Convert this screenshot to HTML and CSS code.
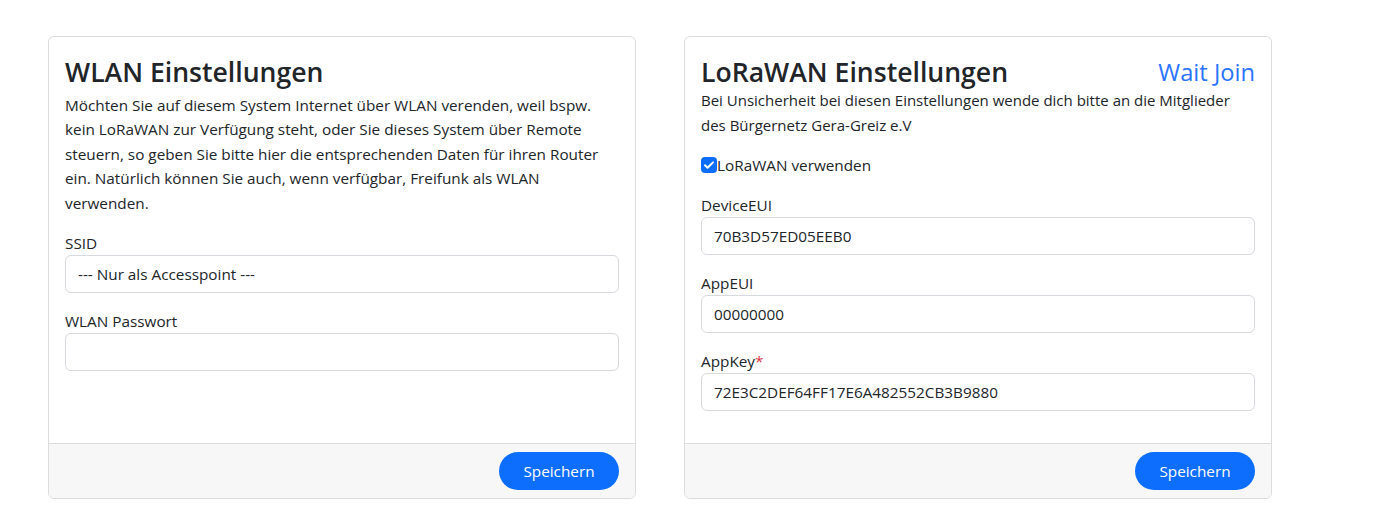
FILE: index.html
```html
<!DOCTYPE html>
<html lang="de">
<head>
<meta charset="utf-8">
<title>Einstellungen</title>
<link rel="stylesheet" href="styles.css">
</head>
<body>
<main class="page">
  <section class="card">
    <div class="card-body">
      <h2 class="card-title title-left">WLAN Einstellungen</h2>
      <p class="card-text">Möchten Sie auf diesem System Internet über WLAN verenden, weil bspw. kein LoRaWAN zur Verfügung steht, oder Sie dieses System über Remote steuern, so geben Sie bitte hier die entsprechenden Daten für ihren Router ein. Natürlich können Sie auch, wenn verfügbar, Freifunk als WLAN verwenden.</p>
      <div class="field">
        <label class="field-label" for="ssid">SSID</label>
        <input class="field-input" id="ssid" type="text" value="--- Nur als Accesspoint ---">
      </div>
      <div class="field">
        <label class="field-label" for="pw">WLAN Passwort</label>
        <input class="field-input" id="pw" type="password" value="">
      </div>
    </div>
    <div class="card-footer">
      <button class="btn-save" type="button">Speichern</button>
    </div>
  </section>

  <section class="card">
    <div class="card-body">
      <div class="card-head">
        <h2 class="card-title">LoRaWAN Einstellungen</h2>
        <span class="status">Wait Join</span>
      </div>
      <p class="card-text card-text-right">Bei Unsicherheit bei diesen Einstellungen wende dich bitte an die Mitglieder des Bürgernetz Gera-Greiz e.V</p>
      <label class="check-row">
        <span class="check-box"><svg viewBox="0 0 16 16" width="16" height="16"><path d="M4 8.2l2.6 2.6L12 5.4" fill="none" stroke="#fff" stroke-width="2" stroke-linecap="round" stroke-linejoin="round"/></svg></span>LoRaWAN verwenden
      </label>
      <div class="field">
        <label class="field-label" for="deveui">DeviceEUI</label>
        <input class="field-input" id="deveui" type="text" value="70B3D57ED05EEB0">
      </div>
      <div class="field">
        <label class="field-label" for="appeui">AppEUI</label>
        <input class="field-input" id="appeui" type="text" value="00000000">
      </div>
      <div class="field field-last">
        <label class="field-label" for="appkey">AppKey<span class="req">*</span></label>
        <input class="field-input" id="appkey" type="text" value="72E3C2DEF64FF17E6A482552CB3B9880">
      </div>
    </div>
    <div class="card-footer">
      <button class="btn-save" type="button">Speichern</button>
    </div>
  </section>
</main>
</body>
</html>
```

FILE: styles.css
```css
* { box-sizing: border-box; }

body {
  margin: 0;
  background: #fff;
  color: #212529;
  font-family: "Open Sans", "Noto Sans", sans-serif;
  font-size: 15.3px;
  line-height: 24px;
}

.page {
  display: grid;
  grid-template-columns: 588px 588px;
  column-gap: 48px;
  padding: 36px 0 0 48px;
  align-items: stretch;
}

.card {
  display: flex;
  flex-direction: column;
  border: 1px solid #dcdcdc;
  border-radius: 6px;
  background: #fff;
  height: 463px;
}

.card-body {
  flex: 1;
  padding: 16px;
}

.card-title {
  margin: 0;
  font-size: 26.6px;
  font-weight: 600;
  line-height: 38px;
  color: #212529;
}

.title-left {
  margin-bottom: 2px;
}

.card-head {
  display: flex;
  justify-content: space-between;
  align-items: center;
  margin-bottom: -3px;
}

.status {
  color: #2a74ff;
  font-size: 23.7px;
  line-height: 30px;
}

.card-text {
  margin: 0 0 16px;
  line-height: 24.4px;
}

.card-text-right {
  font-size: 15px;
  line-height: 24.5px;
}

.field {
  display: flex;
  flex-direction: column;
  margin-bottom: 16px;
}

.field-last {
  margin-bottom: 0;
}

.field-label {
  line-height: 24px;
}

.req {
  color: #dc3545;
}

.field-input {
  height: 38px;
  padding: 6px 12px;
  border: 1px solid #d6d9dd;
  border-radius: 6px;
  font: inherit;
  color: #212529;
  background: #fff;
}

.check-row {
  display: flex;
  align-items: center;
  margin-bottom: 16px;
  line-height: 24px;
}

.check-box {
  display: flex;
  width: 16px;
  height: 16px;
  border-radius: 4px;
  background: #0d6efd;
}

.card-footer {
  display: flex;
  justify-content: flex-end;
  padding: 8px 16px;
  background: #f7f7f7;
  border-top: 1px solid #dcdcdc;
  border-radius: 0 0 6px 6px;
}

.btn-save {
  width: 120px;
  height: 38px;
  border: 0;
  border-radius: 19px;
  background: #0d6efd;
  color: #fff;
  font: inherit;
  cursor: pointer;
}
```
